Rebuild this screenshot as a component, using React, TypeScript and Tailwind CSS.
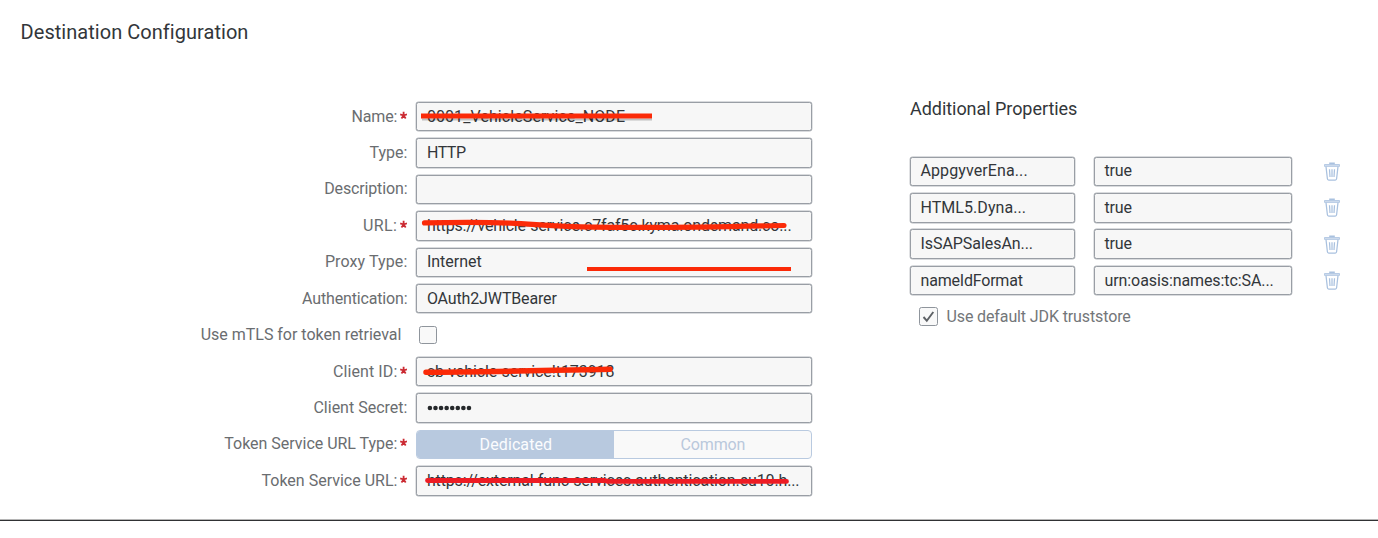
import React from 'react';

type Row = {
  label: string;
  ls: string;
  required?: boolean;
  value?: string;
  vs?: string;
  kind?: 'input' | 'checkbox' | 'segmented' | 'secret';
};

const rows: Row[] = [
  { label: 'Name:', ls: 'tracking-[-0.1px]', required: true, value: '0001_VehicleService_NODE', vs: 'tracking-[0.08px]' },
  { label: 'Type:', ls: '', value: 'HTTP', vs: 'tracking-[-0.45px]' },
  { label: 'Description:', ls: 'tracking-[-0.14px]', value: '' },
  { label: 'URL:', ls: 'tracking-[0.4px]', required: true, value: 'https://vehicle-service.c7faf5c.kyma.ondemand.co...', vs: 'tracking-[-0.16px]' },
  { label: 'Proxy Type:', ls: 'tracking-[0.1px]', value: 'Internet', vs: '' },
  { label: 'Authentication:', ls: 'tracking-[-0.16px]', value: 'OAuth2JWTBearer', vs: 'tracking-[-0.15px]' },
  { label: 'Use mTLS for token retrieval', ls: 'mr-[6px] tracking-[-0.02px]', kind: 'checkbox' },
  { label: 'Client ID:', ls: 'tracking-[0.1px]', required: true, value: 'sb-vehicle-service!t173918', vs: 'tracking-[-0.09px]' },
  { label: 'Client Secret:', ls: '', kind: 'secret' },
  { label: 'Token Service URL Type:', ls: 'tracking-[-0.02px]', required: true, kind: 'segmented' },
  { label: 'Token Service URL:', ls: '', required: true, value: 'https://external-func-services.authentication.eu10.h...', vs: 'tracking-[-0.135px]' },
];

const properties = [
  { name: 'AppgyverEna...', ns: 'tracking-[0.1px]', value: 'true', vs: 'tracking-[-0.2px]' },
  { name: 'HTML5.Dyna...', ns: 'tracking-[0.05px]', value: 'true', vs: 'tracking-[-0.2px]' },
  { name: 'IsSAPSalesAn...', ns: 'tracking-[-0.06px]', value: 'true', vs: 'tracking-[-0.2px]' },
  { name: 'nameIdFormat', ns: 'tracking-[-0.2px]', value: 'urn:oasis:names:tc:SA...', vs: 'tracking-[-0.09px]' },
];

function Field({ width, children }: { width: string; children?: React.ReactNode }) {
  return (
    <div className={`flex h-[29.5px] shrink-0 items-center rounded-[2.5px] border border-[#999ea5] bg-[#f7f7f7] pl-[9.5px] text-[#32363a] shadow-[0_0_0_0.4px_#b4b8bd] ${width}`}>
      {children}
    </div>
  );
}

function Control({ row }: { row: Row }) {
  if (row.kind === 'checkbox') {
    return <div className="ml-[2.5px] size-[18px] rounded-[2.5px] border border-[#8f959c] bg-[#f9f9f9]" />;
  }
  if (row.kind === 'segmented') {
    return (
      <div className="flex h-[29.5px] w-[396px] overflow-hidden rounded-[4px] border border-[#b9cae0] bg-[#f9f9f9]">
        <div className="flex w-[197px] items-center justify-center bg-[#b8c9df] pt-px tracking-[0.1px] text-[#fbfcfe]">Dedicated</div>
        <div className="flex flex-1 items-center justify-center pt-px tracking-[-0.14px] text-[#b9c8dc]">Common</div>
      </div>
    );
  }
  return (
    <Field width="w-[396px]">
      {row.kind === 'secret' ? (
        <svg width="46" height="8" viewBox="0 0 46 8" fill="#25282b">
          {Array.from({ length: 8 }, (_, i) => (
            <circle key={i} cx={2.9 + i * 5.58} cy="4" r="2.3" />
          ))}
        </svg>
      ) : (
        <span className={`whitespace-nowrap ${row.vs ?? ''}`}>{row.value}</span>
      )}
    </Field>
  );
}

function TrashIcon() {
  return (
    <svg width="16" height="19" viewBox="0 0 16 19" fill="none" stroke="#a9c1df" strokeWidth="1.25">
      <path d="M5.2 1.3h5.600" strokeWidth="1.6" />
      <path d="M.5 2.500h15v1.900H.5z" fill="#d0ddee" strokeWidth=".8" />
      <path d="M2 4.600l1.400 12.200q.1 1.200 1.300 1.200h6.600q1.200 0 1.300-1.200L14 4.600" />
      <path d="M5.500 7.200l.5 7.800M8 7.200v7.800M10.500 7.200l-.5 7.800" />
    </svg>
  );
}

export default function App() {
  return (
    <div className="relative flex h-[538px] w-[1378px] flex-col overflow-hidden bg-white font-['Roboto',sans-serif] text-[16px] leading-[20px] text-[#32363a]">
      <h1 className="h-[101.8px] shrink-0 pl-[20.6px] pt-[20px] text-[20px] leading-[24px] tracking-[0.04px]">Destination Configuration</h1>

      <main className="flex h-[417.2px] shrink-0">
        <section className="flex w-[812.5px] shrink-0 flex-col gap-[6.95px]">
          {rows.map((row) => (
            <div key={row.label} className="flex h-[29.5px] shrink-0 items-center">
              <div className="flex w-[416.4px] items-center justify-end pr-[9px] text-[#6a6d70]">
                <span className={`whitespace-nowrap ${row.ls}`}>{row.label}</span>
                {row.required && (
                  <svg className="ml-[2px]" width="8" height="16" viewBox="0 0 8 16" fill="none" stroke="#cb2a32" strokeWidth="1.8">
                    <path d="M4.600 6.500V2.800M4.600 6.500L1.200 5.400M4.600 6.500L8 5.400M4.600 6.500L2.500 9.500M4.600 6.500L6.700 9.500" />
                  </svg>
                )}
              </div>
              <Control row={row} />
            </div>
          ))}
        </section>

        <section className="ml-[97.5px]">
          <h2 className="-mt-[5px] h-[59.8px] text-[18px] leading-[23px] tracking-[-0.05px]">Additional Properties</h2>
          <div className="flex flex-col gap-[6.95px]">
            {properties.map((p) => (
              <div key={p.name} className="flex items-center">
                <Field width="w-[165px]">
                  <span className={p.ns}>{p.name}</span>
                </Field>
                <div className="w-[19px]" />
                <Field width="w-[198px]">
                  <span className={p.vs}>{p.value}</span>
                </Field>
                <div className="ml-[32px]">
                  <TrashIcon />
                </div>
              </div>
            ))}
          </div>
          <div className="mt-[11.4px] flex items-center pl-[9px]">
            <div className="flex size-[19px] items-center justify-center rounded-[2.5px] border border-[#8f959c] bg-[#f9f9f9]">
              <svg width="13" height="13" viewBox="0 0 13 13" fill="none" stroke="#5d6165" strokeWidth="1.9">
                <path d="M1.5 7l3.3 3.7L11.3 2" />
              </svg>
            </div>
            <span className="ml-[8.5px] tracking-[-0.12px] text-[#737679]">Use default JDK truststore</span>
          </div>
        </section>
      </main>

      <div className="h-[2px] shrink-0 border-b border-[#303234] bg-[#b5b5b5]" />

      <svg className="pointer-events-none absolute inset-0" width="1378" height="538" fill="none">
        <path d="M422 119.600H652" stroke="#000" strokeOpacity=".22" strokeWidth="2" />
        <path d="M421 116H652" stroke="#fb2a08" strokeWidth="5" />
        <path d="M424.500 222.900C450 222.300 485 222 510 223.200C535 224.200 555 226.600 594 227.200C650 227.900 720 227 784 225.500" stroke="#fb2a08" strokeWidth="5.200" strokeLinecap="round" />
        <path d="M587 269H791" stroke="#fb2a08" strokeWidth="4" />
        <path d="M426 372.200C480 372 550 370.300 610 369.300" stroke="#fb2a08" strokeWidth="5.500" strokeLinecap="round" />
        <path d="M427.500 480.500H604L608 481.400H786.500" stroke="#ee1c24" strokeWidth="4.800" strokeLinecap="round" />
      </svg>
    </div>
  );
}
